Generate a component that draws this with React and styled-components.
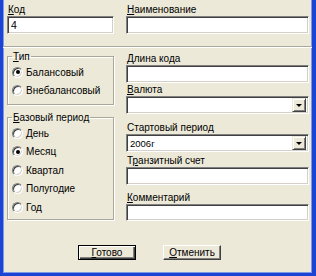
import React from "react";
import styled, { createGlobalStyle } from "styled-components";

const Global = createGlobalStyle`
  html, body { margin: 0; padding: 0; background: #ECE9D8; }
  * { box-sizing: border-box; }
`;

const Window = styled.div`
  width: 316px;
  height: 276px;
  background: #ECE9D8;
  border-left: 3px solid #1B43D4;
  border-right: 4px solid #1B43D4;
  border-bottom: 3px solid #1B43D4;
  box-shadow: inset 1px 0 0 #7D98E6, inset -1px 0 0 #7D98E6, inset 0 -1px 0 #7D98E6;
  display: flex;
  flex-direction: column;
  font-family: "Liberation Sans", Arial, sans-serif;
  font-size: 10px;
  color: #000;
`;

const Columns = styled.div`
  display: grid;
  grid-template-columns: 107px 183px;
  column-gap: 12px;
  padding: ${(p) => p.$pad || "0 3px 0 4px"};
`;

const Col = styled.div`
  display: flex;
  flex-direction: column;
`;

const Label = styled.div`
  height: 12px;
  line-height: 12px;
  padding-left: 1px;
  white-space: nowrap;
  margin-top: ${(p) => p.$mt || 0}px;
`;

const Input = styled.div`
  height: ${(p) => p.$h || 18}px;
  background: #fff;
  border-top: 1px solid #808080;
  border-left: 1px solid #808080;
  border-right: 1px solid #fff;
  border-bottom: 1px solid #fff;
  box-shadow: inset 1px 1px 0 #404040, inset -1px -1px 0 #D4D0C8;
  padding: 0 3px;
  display: flex;
  align-items: center;
  font-size: ${(p) => p.$fs || 10.5}px;
`;

const Select = styled(Input)`
  padding-right: 2px;
  justify-content: space-between;
`;

const DropButton = styled.div`
  width: 14px;
  height: 14px;
  background: #ECE9D8;
  border-top: 1px solid #ECE9D8;
  border-left: 1px solid #ECE9D8;
  border-right: 1px solid #404040;
  border-bottom: 1px solid #404040;
  box-shadow: inset 1px 1px 0 #fff, inset -1px -1px 0 #808080;
  display: flex;
  align-items: center;
  justify-content: center;
`;

const Arrow = styled.span`
  width: 0;
  height: 0;
  border-left: 3px solid transparent;
  border-right: 3px solid transparent;
  border-top: 3px solid #000;
  margin-top: 1px;
`;

const Separator = styled.div`
  height: 2px;
  margin-top: 12px;
  border-top: 1px solid #ACA899;
  border-bottom: 1px solid #fff;
`;

const Group = styled.fieldset`
  margin: ${(p) => p.$mt || 0}px 0 0 0;
  padding: 0 4px ${(p) => p.$pb || 4}px 4px;
  border: 1px solid #ACA899;
  box-shadow: inset 1px 1px 0 #fff, 1px 1px 0 #fff;
  min-width: 0;
`;

const Legend = styled.legend`
  padding: 0 1px;
  height: 13px;
  line-height: 13px;
`;

const RadioRow = styled.div`
  height: ${(p) => p.$h || 18}px;
  display: flex;
  align-items: center;
  gap: 3px;
`;

const RadioCircle = styled.span`
  position: relative;
  width: 11px;
  height: 11px;
  border-radius: 50%;
  background: #fff;
  border: 1px solid;
  border-color: #808080 #fff #fff #808080;
  box-shadow: inset 1px 1px 0 #404040, inset -1px -1px 0 #D4D0C8;
  flex: none;

  &::after {
    content: "";
    display: ${(p) => (p.$checked ? "block" : "none")};
    position: absolute;
    left: 2.5px;
    top: 2.5px;
    width: 4px;
    height: 4px;
    border-radius: 50%;
    background: #000;
  }
`;

const ButtonRow = styled.div`
  display: flex;
  gap: 27px;
  padding-left: 75px;
  margin-top: auto;
  margin-bottom: 13px;
`;

const Button = styled.div`
  width: 58px;
  height: 15px;
  background: #ECE9D8;
  display: flex;
  align-items: center;
  justify-content: center;
  border: 1px solid;
  border-color: ${(p) => (p.$default ? "#000" : "#fff #404040 #404040 #fff")};
  box-shadow: ${(p) =>
    p.$default
      ? "inset 1px 1px 0 #fff, inset -1px -1px 0 #404040, inset -2px -2px 0 #808080"
      : "inset -1px -1px 0 #808080"};
  line-height: 12px;
`;

const Radio = ({ checked, children, h }) => (
  <RadioRow $h={h}>
    <RadioCircle $checked={checked} />
    <span>{children}</span>
  </RadioRow>
);

const Combo = ({ children }) => (
  <Select $fs={9.5}>
    <span>{children}</span>
    <DropButton>
      <Arrow />
    </DropButton>
  </Select>
);

export default function App() {
  return (
    <>
      <Global />
      <Window>
        <Columns $pad="4px 3px 0 4px">
          <Col>
            <Label>
              <u>К</u>од
            </Label>
            <Input>4</Input>
          </Col>
          <Col>
            <Label>
              <u>Н</u>аименование
            </Label>
            <Input />
          </Col>
        </Columns>
        <Separator />
        <Columns>
          <Col>
            <Group $mt={2} $pb={5}>
              <Legend>
                <u>Т</u>ип
              </Legend>
              <Radio checked>Балансовый</Radio>
              <Radio>Внебалансовый</Radio>
            </Group>
            <Group $mt={6} $pb={2}>
              <Legend>
                <u>Б</u>азовый период
              </Legend>
              <Radio h={18.5}>День</Radio>
              <Radio h={18.5} checked>
                Месяц
              </Radio>
              <Radio h={18.5}>Квартал</Radio>
              <Radio h={18.5}>Полугодие</Radio>
              <Radio h={18.5}>Год</Radio>
            </Group>
          </Col>
          <Col>
            <Label $mt={5}>
              <u>Д</u>лина кода
            </Label>
            <Input />
            <Label $mt={1}>
              <u>В</u>алюта
            </Label>
            <Combo />
            <Label $mt={8}>Стартовый период</Label>
            <Combo>2006г</Combo>
            <Label $mt={3}>
              Т<u>р</u>анзитный счет
            </Label>
            <Input />
            <Label $mt={7}>
              <u>К</u>омментарий
            </Label>
            <Input $h={17} />
          </Col>
        </Columns>
        <ButtonRow>
          <Button $default>
            <span>
              <u>Г</u>отово
            </span>
          </Button>
          <Button>
            <span>
              <u>О</u>тменить
            </span>
          </Button>
        </ButtonRow>
      </Window>
    </>
  );
}
